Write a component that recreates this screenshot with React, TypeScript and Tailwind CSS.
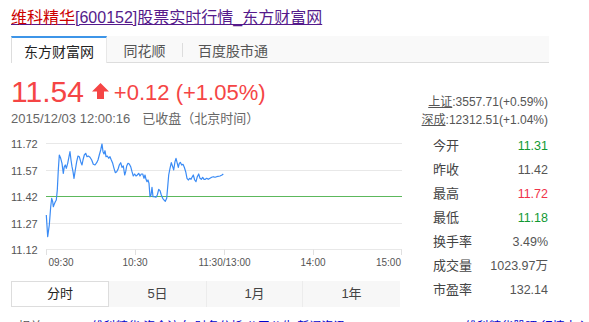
import React from "react";

// 分时走势 traced in 3x zoom coords: x/3 - 11 = svg x, y/3 = svg y
const trace: [number, number][] = [
  [139, 255], [143, 320], [148, 285], [152, 230], [155, 205], [158, 215], [160, 230],
  [163, 222], [166, 215], [169, 210], [172, 180], [175, 120], [178, 75], [182, 85],
  [186, 100], [190, 130], [193, 110], [196, 105], [199, 115], [203, 100], [207, 80],
  [210, 65], [213, 90], [216, 110], [219, 125], [222, 145], [226, 120], [230, 95],
  [234, 78], [238, 80], [242, 95], [246, 105], [249, 90], [253, 75], [257, 70],
  [261, 80], [265, 78], [270, 82], [275, 90], [280, 103], [285, 105], [290, 98],
  [294, 90], [298, 75], [302, 60], [306, 42], [309, 65], [312, 72], [315, 62],
  [318, 80], [322, 78], [326, 85], [330, 80], [334, 90], [338, 100], [342, 115],
  [346, 128], [350, 125], [354, 118], [358, 105], [362, 98], [366, 112], [370, 108],
  [374, 135], [377, 125], [380, 108], [384, 100], [388, 102], [392, 110], [396, 125],
  [400, 138], [404, 132], [408, 138], [412, 135], [416, 130], [420, 138], [424, 132],
  [428, 132], [432, 145], [435, 135], [438, 148], [441, 155], [444, 150], [447, 160],
  [450, 200], [453, 195], [456, 172], [459, 200], [463, 200], [468, 202], [472, 195],
  [476, 178], [480, 182], [484, 195], [488, 205], [492, 210], [496, 214], [500, 205],
  [503, 170], [506, 135], [510, 115], [514, 98], [518, 110], [521, 120], [525, 95],
  [528, 85], [532, 100], [535, 112], [538, 100], [541, 97], [545, 105], [549, 103],
  [553, 112], [557, 125], [561, 145], [565, 150], [569, 145], [573, 148], [577, 140],
  [580, 135], [584, 150], [588, 155], [592, 140], [596, 132], [600, 145], [604, 148],
  [608, 142], [612, 148], [616, 148], [620, 145], [625, 148], [630, 145], [635, 142],
  [640, 140], [645, 142], [650, 140], [660, 138], [666, 135], [670, 132],
];

const yLabels = [
  { v: "11.72", y: 13.5 },
  { v: "11.57", y: 40.5 },
  { v: "11.42", y: 66.5 },
  { v: "11.27", y: 93.5 },
  { v: "11.12", y: 119.5 },
];

const stats = [
  { k: "今开", v: "11.31", c: "text-[#119933]" },
  { k: "昨收", v: "11.42", c: "text-[#555]" },
  { k: "最高", v: "11.72", c: "text-[#f0334a]" },
  { k: "最低", v: "11.18", c: "text-[#119933]" },
  { k: "换手率", v: "3.49%", c: "text-[#555]" },
  { k: "成交量", v: "1023.97万", c: "text-[#555]" },
  { k: "市盈率", v: "132.14", c: "text-[#555]" },
];

function Chart() {
  const pts = trace.map(([x, y]) => `${(x / 3 - 11).toFixed(1)},${(y / 3).toFixed(1)}`).join(" ");
  return (
    <svg width="391" height="142" viewBox="0 0 391 142" className="mt-[2px] block">
      {yLabels.map((l) => (
        <g key={l.v}>
          <line x1="35" x2="391" y1={l.y} y2={l.y} stroke="#e8e8e8" strokeWidth="1" />
          <text x="0" y={l.y + 4} fontSize="11" fill="#555" fontFamily="Liberation Sans, sans-serif">
            {l.v}
          </text>
        </g>
      ))}
      <line x1="35" x2="391" y1="66.5" y2="66.5" stroke="#5cb85c" strokeWidth="1" />
      {[35.5, 124.5, 213.5, 302.5, 390.5].map((x) => (
        <line key={x} x1={x} x2={x} y1="119.5" y2="125" stroke="#e0e0e0" strokeWidth="1" />
      ))}
      <polyline points={pts} fill="none" stroke="#3a8bf5" strokeWidth="1.2" strokeLinejoin="round" />
      <g fontSize="10" fill="#555" fontFamily="Liberation Sans, sans-serif">
        <text x="37.5" y="136">09:30</text>
        <text x="124" y="136" textAnchor="middle">10:30</text>
        <text x="213.5" y="136" textAnchor="middle">11:30/13:00</text>
        <text x="302" y="136" textAnchor="middle">14:00</text>
        <text x="390" y="136" textAnchor="end">15:00</text>
      </g>
    </svg>
  );
}

export default function App() {
  return (
    <div className="w-[589px] bg-white font-['Liberation_Sans','Noto_Sans_CJK_SC',sans-serif]">
      <div className="pl-[11px] pt-[8px] text-[16px] leading-[20px]">
        <a href="#" className="text-[#551a8b] underline">
          <span className="text-[#cc0000]">维科精华</span>[600152]股票实时行情_东方财富网
        </a>
      </div>

      <div className="ml-[11px] mt-[8px] flex h-[27px] w-[538px] items-stretch border-b border-[#ddd] bg-[#f9f9f9] text-[14px]">
        <div className="-mb-px flex w-[96px] items-center justify-center border-l border-r border-t-2 border-l-[#ddd] border-r-[#e8e8e8] border-t-[#3d95e8] bg-white pt-[3px] text-[#222]">
          东方财富网
        </div>
        <div className="flex w-[75px] items-center justify-center pt-[5px] text-[#555]">同花顺</div>
        <div className="mt-[7px] h-[14px] w-px bg-[#ddd]" />
        <div className="flex w-[100px] items-center justify-center pt-[5px] text-[#555]">百度股市通</div>
      </div>

      <div className="ml-[11px] flex w-[538px]">
        <div className="w-[391px]">
          <div className="mt-[14px] flex items-end text-[#f54545]">
            <span className="text-[30px] leading-[30px]">11.54</span>
            <svg width="17" height="16" viewBox="0 0 17 16" className="mb-[8px] ml-[8px]">
              <path d="M8.5 0 L17 8.5 L12 8.5 L12 16 L5 16 L5 8.5 L0 8.5 Z" fill="#f54545" />
            </svg>
            <span className="mb-[3px] ml-[5px] text-[22px] leading-[22px]">+0.12 (+1.05%)</span>
          </div>
          <div className="mt-[3px] text-[13px] leading-[18px] text-[#666]">
            2015/12/03 12:00:16<span className="ml-[12px]">已收盘（北京时间）</span>
          </div>
          <Chart />
          <div className="mt-[9px] flex h-[26px] w-[389px] bg-[#f7f7f7] text-[13px] text-[#444]">
            <div className="flex w-[98px] items-center justify-center border border-[#ddd] bg-white text-[#222]">分时</div>
            <div className="flex w-[98px] items-center justify-center border-r border-[#ececec]">5日</div>
            <div className="flex w-[96px] items-center justify-center border-r border-[#ececec]">1月</div>
            <div className="flex flex-1 items-center justify-center">1年</div>
          </div>
        </div>

        <div className="flex-1 pr-px pt-[30px] text-[#555]">
          <div className="text-right text-[12px] leading-[18px]">
            <div>
              <span className="underline">上证</span>:3557.71(+0.59%)
            </div>
            <div>
              <span className="underline">深成</span>:12312.51(+1.04%)
            </div>
          </div>
          <div className="mt-[5px] pl-[31px]">
            {stats.map((s) => (
              <div key={s.k} className="flex h-[24px] items-center justify-between">
                <span className="text-[13px] text-[#444]">{s.k}</span>
                <span className={`text-[12.5px] ${s.c}`}>{s.v}</span>
              </div>
            ))}
          </div>
        </div>
      </div>

      <div className="mt-[11px] flex text-[12px] leading-[18px]">
        <span className="ml-[18px] text-[#555]">相关</span>
        <span className="ml-[50px] text-[#0000cc]">维科精华 资金流向 财务分析 公司公告 新闻资讯</span>
        <span className="ml-[120px] text-[#0000cc]">维科精华股吧 行情中心</span>
      </div>
    </div>
  );
}
